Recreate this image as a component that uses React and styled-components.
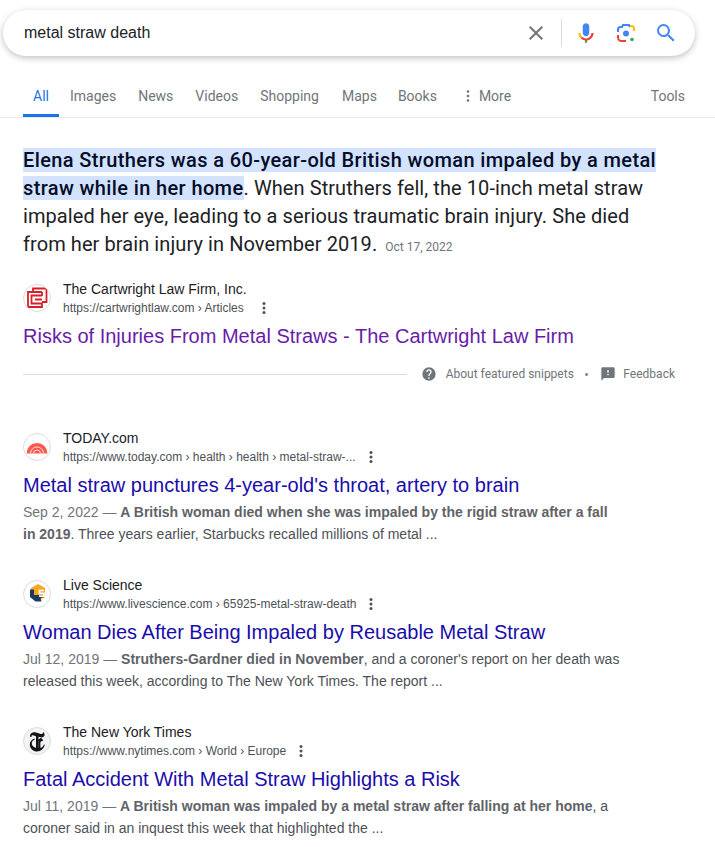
import styled, { createGlobalStyle } from "styled-components";

const GlobalStyle = createGlobalStyle`
  html, body {
    margin: 0;
    padding: 0;
    background: #fff;
    font-family: "Liberation Sans", Arial, sans-serif;
  }
  * { box-sizing: border-box; }
`;

const Page = styled.div`
  width: 715px;
  height: 847px;
  overflow: hidden;
  padding-top: 10px;
`;

const SearchBar = styled.div`
  width: 692px;
  height: 46px;
  margin-left: 3px;
  padding: 0 17px 0 21px;
  display: flex;
  align-items: center;
  border-radius: 23px;
  background: #fff;
  box-shadow: 0 2px 6px rgba(32, 33, 36, 0.28);
`;

const Query = styled.div`
  flex: 1;
  font-size: 16px;
  color: #202124;
`;

const IconRow = styled.div`
  display: flex;
  align-items: center;
`;

const Divider = styled.div`
  width: 1px;
  height: 28px;
  margin: 0 11px 0 13px;
  background: #dadce0;
`;

const IconGap = styled.div`
  width: ${(p) => p.$w}px;
`;

const Tabs = styled.nav`
  height: 62px;
  padding: 0 30px 0 23px;
  display: flex;
  align-items: flex-end;
  border-bottom: 1px solid #ebebeb;
`;

const Tab = styled.div`
  height: 40px;
  padding: 8px ${(p) => (p.$active ? "10px" : "0")} 0;
  margin-right: ${(p) => p.$mr || 0}px;
  display: flex;
  align-items: flex-start;
  font-family: Roboto, sans-serif;
  font-size: 14px;
  line-height: 22px;
  color: ${(p) => (p.$active ? "#1a73e8" : "#70757a")};
  border-bottom: ${(p) => (p.$active ? "3px solid #1a73e8" : "none")};
`;

const Dots = styled.svg`
  margin: 4px 9px 0 0;
`;

const Spacer = styled.div`
  flex: 1;
`;

const Featured = styled.section`
  padding: 28px 40px 0 23px;
`;

const Snippet = styled.div`
  width: 648px;
  font-family: Roboto, sans-serif;
  font-size: 20px;
  line-height: 28px;
  letter-spacing: 0.08px;
  color: #202124;
`;

const Highlight = styled.span`
  background: #d3e3fd;
  color: #040c28;
  font-weight: 500;
  letter-spacing: 0.38px;
`;

const SnippetDate = styled.span`
  margin-left: 8px;
  font-size: 12px;
  letter-spacing: 0;
  color: #70757a;
`;

const Result = styled.article`
  width: ${(p) => p.$w || 600}px;
  margin-top: ${(p) => p.$mt}px;
`;

const Source = styled.div`
  display: flex;
  align-items: center;
  height: 30px;
`;

const Favicon = styled.div`
  width: 28px;
  height: 28px;
  margin-right: 12px;
  flex: none;
  display: flex;
  align-items: center;
  justify-content: center;
  border-radius: 50%;
  background: ${(p) => p.$bg || "#fff"};
  border: 1px solid #dadce0;
  overflow: hidden;
`;

const SourceText = styled.div`
  min-width: 0;
`;

const SiteName = styled.div`
  font-size: 14px;
  line-height: 20px;
  color: #202124;
`;

const UrlRow = styled.div`
  display: flex;
  align-items: center;
  font-size: 12px;
  line-height: 18px;
  color: #4d5156;
  white-space: nowrap;
`;

const MoreDots = styled.svg`
  margin-left: ${(p) => p.$ml}px;
`;

const Title = styled.a`
  display: block;
  margin-top: 10px;
  font-size: 20px;
  line-height: 26px;
  color: ${(p) => (p.$visited ? "#681da8" : "#1a0dab")};
`;

const Description = styled.p`
  margin: 3px 0 0;
  font-size: 14px;
  line-height: 22px;
  color: #4d5156;
`;

const DateText = styled.span`
  color: #70757a;
`;

const Em = styled.b`
  color: #5f6368;
`;

const FooterRow = styled.div`
  display: flex;
  align-items: center;
  height: 24px;
  margin-top: 13px;
`;

const Rule = styled.div`
  flex: 1;
  height: 1px;
  background: #dadce0;
`;

const FooterLink = styled.span`
  font-family: Roboto, sans-serif;
  font-size: 12px;
  color: #70757a;
`;

const FooterIcon = styled.svg`
  margin: 0 ${(p) => p.$mr}px 0 ${(p) => p.$ml}px;
`;

const Bullet = styled.span`
  margin: 0 12px 0 11px;
  font-size: 10px;
  color: #70757a;
`;

const Kebab = ({ ml = 13 }) => (
  <MoreDots $ml={ml} width="4" height="14" viewBox="0 0 4 14">
    <circle cx="2" cy="2.5" r="1.5" fill="#4d5156" />
    <circle cx="2" cy="7" r="1.5" fill="#4d5156" />
    <circle cx="2" cy="11.5" r="1.5" fill="#4d5156" />
  </MoreDots>
);

const CartwrightLogo = () => (
  <svg width="22" height="22" viewBox="0 0 22 22" fill="none" stroke="#d71f26" strokeWidth="1.8">
    <path d="M7 5V1.500h13.500V15H16" />
    <path d="M16 5H2v15h14v-4" />
    <path d="M16 8.500H5.500v8H16" />
    <path d="M16 12.500H9" />
    <path d="M16 5v4" />
  </svg>
);

const TodayLogo = () => (
  <svg width="22" height="14" viewBox="0 0 22 14">
    <path d="M0.500 13.500a10.500 10.500 0 0 1 21 0z" fill="#fd5a4f" />
    <path d="M4.500 13.500a6.500 6.500 0 0 1 13 0" fill="none" stroke="#fff" strokeWidth="0.800" />
    <path d="M7.500 13.500a3.500 3.500 0 0 1 7 0" fill="none" stroke="#fff" strokeWidth="0.800" />
  </svg>
);

const LiveScienceLogo = () => (
  <svg width="22" height="22" viewBox="0 0 22 22">
    <path d="M12 1l7 4v9l-7 4-7-4V5z" fill="#f7a823" />
    <path d="M4 6.500h4V12h9l1.500 2-4 1 1 3.500h-6L4 14z" fill="#1f3a5c" />
    <path d="M18 7.500h-4.500v2.800H18v2.900h-5" fill="none" stroke="#fff" strokeWidth="1.700" />
  </svg>
);

const NytLogo = () => (
  <svg width="17" height="21" viewBox="0 0 17 21">
    <path
      d="M1 5C1 2 4 .500 7 1.500l5 1.500c1.200.300 2-.300 2-2 2 1.200 2.500 4.800-1 5.500L9.500 5.800V17l-2.500 1.200V5.200L4 4.300C3 4 2.300 4.400 2.600 6 1.600 6 1 5.600 1 5z"
      fill="#151515"
    />
    <path
      d="M5.600 7.500C2.500 8.500.500 10.800.800 14c.300 4 3.700 6.500 7.200 6.500 4 0 7-3 7.800-6.700l-.800-.300c-.700 1.800-2 3-3.600 3.600V11l3-1.800-2.500-2.400-3.900 2.700v1.200l1.400-.900v7c-.800.200-1.700.200-2.600 0C3.800 15.900 2.600 14 2.800 12c.100-1.400 1-2.600 2.800-3.200z"
      fill="#151515"
    />
  </svg>
);

const results = [
  {
    name: "TODAY.com",
    url: "https://www.today.com › health › health › metal-straw-...",
    title: "Metal straw punctures 4-year-old's throat, artery to brain",
    date: "Sep 2, 2022",
    bold: "A British woman died when she was impaled by the rigid straw after a fall in 2019",
    rest: ". Three years earlier, Starbucks recalled millions of metal ...",
    logo: <TodayLogo />,
    mt: 46,
  },
  {
    name: "Live Science",
    url: "https://www.livescience.com › 65925-metal-straw-death",
    title: "Woman Dies After Being Impaled by Reusable Metal Straw",
    date: "Jul 12, 2019",
    bold: "Struthers-Gardner died in November",
    rest: ", and a coroner's report on her death was released this week, according to The New York Times. The report ...",
    logo: <LiveScienceLogo />,
    mt: 34,
  },
  {
    name: "The New York Times",
    url: "https://www.nytimes.com › World › Europe",
    title: "Fatal Accident With Metal Straw Highlights a Risk",
    date: "Jul 11, 2019",
    bold: "A British woman was impaled by a metal straw after falling at her home",
    rest: ", a coroner said in an inquest this week that highlighted the ...",
    logo: <NytLogo />,
    bg: "#f1f3f4",
    mt: 34,
  },
];

const tabs = [
  ["Images", 22],
  ["News", 22],
  ["Videos", 22],
  ["Shopping", 23],
  ["Maps", 21],
  ["Books", 29],
];

export default function App() {
  return (
    <Page>
      <GlobalStyle />
      <SearchBar>
        <Query>metal straw death</Query>
        <IconRow>
          <svg width="24" height="24" viewBox="0 0 24 24">
            <path
              d="M19 6.410L17.590 5 12 10.590 6.410 5 5 6.410 10.590 12 5 17.590 6.410 19 12 13.410 17.590 19 19 17.590 13.410 12z"
              fill="#70757a"
            />
          </svg>
          <Divider />
          <svg width="26" height="26" viewBox="0 0 24 24">
            <path d="M12 15c1.660 0 3-1.310 3-2.970V5.970C15 4.310 13.660 3 12 3S9 4.310 9 5.970v6.060C9 13.690 10.340 15 12 15z" fill="#4285f4" />
            <path d="M11 18.080h2V21h-2z" fill="#34a853" />
            <path d="M7.050 16.870A6.970 6.970 0 0 0 12 19v-2a5 5 0 0 1-3.530-1.530z" fill="#ea4335" />
            <path d="M12 17v2c3.870 0 7-3.130 7-7h-2a5 5 0 0 1-5 5z" fill="#ea4335" />
            <path d="M5 12c0 1.930.780 3.680 2.050 4.950l1.420-1.420A5 5 0 0 1 7 12z" fill="#fbbc04" />
          </svg>
          <IconGap $w={15} />
          <svg width="24" height="24" viewBox="0 0 24 24">
            <circle cx="12" cy="12.500" r="3" fill="#4285f4" />
            <circle cx="18" cy="18.500" r="1.800" fill="#34a853" />
            <path d="M4 11V8.500A2.500 2.500 0 0 1 6.500 6H8l1-2h6l1 2" fill="none" stroke="#4285f4" strokeWidth="2" />
            <path d="M16 5h1.500A2.500 2.500 0 0 1 20 7.500V10" fill="none" stroke="#fbbc04" strokeWidth="2" />
            <path d="M4 14v2.500A3.500 3.500 0 0 0 7.500 20H12" fill="none" stroke="#ea4335" strokeWidth="2" />
          </svg>
          <IconGap $w={16} />
          <svg width="24" height="24" viewBox="0 0 24 24">
            <path
              d="M15.500 14h-.790l-.280-.270A6.470 6.470 0 0 0 16 9.500 6.500 6.500 0 1 0 9.500 16c1.610 0 3.090-.590 4.230-1.570l.270.280v.790l5 4.990L20.490 19zm-6 0C7.010 14 5 11.990 5 9.500S7.010 5 9.500 5 14 7.010 14 9.500 11.990 14 9.500 14z"
              fill="#4285f4"
            />
          </svg>
        </IconRow>
      </SearchBar>

      <Tabs>
        <Tab $active $mr={11}>All</Tab>
        {tabs.map(([label, mr]) => (
          <Tab key={label} $mr={mr}>{label}</Tab>
        ))}
        <Tab>
          <Dots width="4" height="14" viewBox="0 0 4 14">
            <circle cx="2" cy="2.500" r="1.300" fill="#70757a" />
            <circle cx="2" cy="7" r="1.300" fill="#70757a" />
            <circle cx="2" cy="11.500" r="1.300" fill="#70757a" />
          </Dots>
          More
        </Tab>
        <Spacer />
        <Tab>Tools</Tab>
      </Tabs>

      <Featured>
        <Snippet>
          <Highlight>
            Elena Struthers was a 60-year-old British woman impaled by a metal straw while in her home
          </Highlight>
          . When Struthers fell, the 10-inch metal straw impaled her eye, leading to a serious traumatic brain injury. She died from her brain injury in November 2019.
          <SnippetDate>Oct 17, 2022</SnippetDate>
        </Snippet>

        <Result $mt={22} $w={652}>
          <Source>
            <Favicon>
              <CartwrightLogo />
            </Favicon>
            <SourceText>
              <SiteName>The Cartwright Law Firm, Inc.</SiteName>
              <UrlRow>
                https://cartwrightlaw.com › Articles
                <Kebab ml={18} />
              </UrlRow>
            </SourceText>
          </Source>
          <Title $visited>Risks of Injuries From Metal Straws - The Cartwright Law Firm</Title>
        </Result>

        <FooterRow>
          <Rule />
          <FooterIcon $ml={14} $mr={9} width="16" height="16" viewBox="0 0 24 24">
            <path
              d="M12 2a10 10 0 1 0 0 20 10 10 0 0 0 0-20zm1 17h-2v-2h2zm2.070-7.750l-.900.920C13.450 12.900 13 13.500 13 15h-2v-.500c0-1.100.450-2.100 1.170-2.830l1.240-1.260A2 2 0 1 0 10 9H8a4 4 0 1 1 8 0c0 .880-.360 1.680-.930 2.250z"
              fill="#70757a"
            />
          </FooterIcon>
          <FooterLink>About featured snippets</FooterLink>
          <Bullet>•</Bullet>
          <FooterIcon $ml={0} $mr={7} width="16" height="16" viewBox="0 0 24 24">
            <path
              d="M20 2H4c-1.100 0-2 .900-2 2v18l4-4h14c1.100 0 2-.900 2-2V4c0-1.100-.900-2-2-2zm-7 12h-2v-2h2zm0-4h-2V6h2z"
              fill="#70757a"
            />
          </FooterIcon>
          <FooterLink>Feedback</FooterLink>
        </FooterRow>

        {results.map((r) => (
          <Result key={r.name} $mt={r.mt}>
            <Source>
              <Favicon $bg={r.bg}>{r.logo}</Favicon>
              <SourceText>
                <SiteName>{r.name}</SiteName>
                <UrlRow>
                  {r.url}
                  <Kebab />
                </UrlRow>
              </SourceText>
            </Source>
            <Title>{r.title}</Title>
            <Description>
              <DateText>{r.date} — </DateText>
              <Em>{r.bold}</Em>
              {r.rest}
            </Description>
          </Result>
        ))}
      </Featured>
    </Page>
  );
}
